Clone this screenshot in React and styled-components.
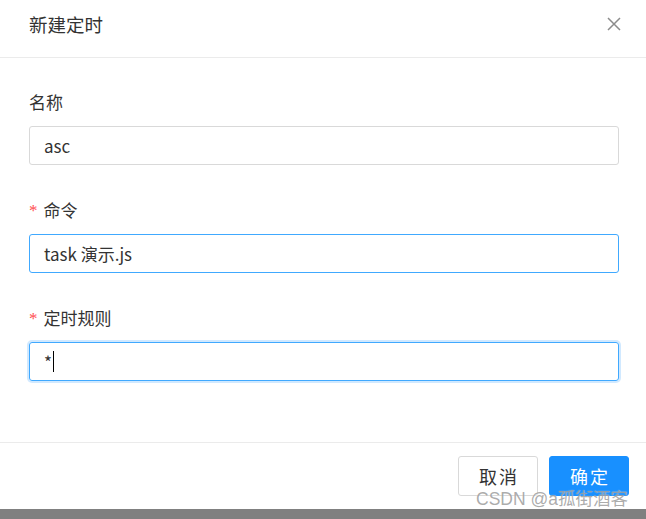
import React from 'react'
import styled, { createGlobalStyle } from 'styled-components'

const GlobalStyle = createGlobalStyle`
  html, body {
    margin: 0;
    padding: 0;
    background: #fff;
  }
  body {
    font-family: "Noto Sans CJK SC", "Noto Sans", sans-serif;
    color: #333;
  }
`

const Page = styled.div`
  position: relative;
  width: 646px;
  height: 519px;
  overflow: hidden;
  display: flex;
  flex-direction: column;
`

const Dialog = styled.div`
  flex: 1;
  display: flex;
  flex-direction: column;
  background: #fff;
`

const Header = styled.div`
  height: 57px;
  border-bottom: 1px solid #ebebeb;
  display: flex;
  align-items: center;
  justify-content: space-between;
  padding: 0 25px 0 29px;
  box-sizing: content-box;
`

const Title = styled.div`
  font-size: 18.5px;
  line-height: 24px;
  margin-top: -10px;
  color: #333;
`

const Close = styled.button`
  border: 0;
  background: none;
  padding: 0;
  width: 14px;
  height: 14px;
  margin-top: -10px;
  display: flex;
  cursor: pointer;
`

const Body = styled.div`
  padding: 30px 27px 30px 29px;
  border-bottom: 1px solid #ebebeb;
`

const Item = styled.div`
  display: flex;
  flex-direction: column;
  margin-bottom: 31px;
`

const Label = styled.label`
  height: 28px;
  line-height: 28px;
  margin-bottom: 10px;
  font-size: 17px;
  color: #333;
  display: flex;
  align-items: center;
`

const Star = styled.span`
  color: #ff4d4f;
  font-family: "Liberation Serif", serif;
  font-size: 17px;
  margin-right: 6px;
  margin-top: 2px;
`

const Field = styled.div`
  height: 39px;
  box-sizing: border-box;
  border: 1px solid ${p => (p.$active ? '#40a9ff' : '#d9d9d9')};
  border-radius: 3px;
  box-shadow: ${p => (p.$focus ? '0 0 0 2px rgba(24, 144, 255, 0.2)' : 'none')};
  padding: 0 14px;
  display: flex;
  align-items: center;
  font-size: 17px;
  color: #333;
`

const Caret = styled.span`
  display: inline-block;
  width: 1px;
  height: 21px;
  background: #000;
  margin-left: 1px;
`

const Footer = styled.div`
  display: flex;
  justify-content: flex-end;
  gap: 11px;
  padding: 13px 17px 0 0;
  flex: 1;
`

const Button = styled.button`
  width: 80px;
  height: 40px;
  box-sizing: border-box;
  border-radius: 3px;
  font-family: "Noto Sans CJK SC", sans-serif;
  font-size: 18px;
  letter-spacing: 0.12em;
  text-indent: 0.12em;
  cursor: pointer;
  border: 1px solid ${p => (p.$primary ? '#1890ff' : '#d9d9d9')};
  background: ${p => (p.$primary ? '#1890ff' : '#fff')};
  color: ${p => (p.$primary ? '#fff' : '#333')};
`

const Backdrop = styled.div`
  height: 10px;
  background: #808080;
`

const Watermark = styled.div`
  position: absolute;
  right: 18px;
  bottom: 9px;
  font-size: 17.5px;
  line-height: 22px;
  color: rgba(135, 135, 135, 0.7);
  font-family: "Liberation Sans", "Noto Sans CJK SC", sans-serif;
  text-shadow: 0 0 1px rgba(255, 255, 255, 0.7);
  pointer-events: none;
`

const CloseIcon = () => (
  <svg width="14" height="14" viewBox="0 0 14 14">
    <path d="M1 1 L13 13 M13 1 L1 13" stroke="#8c8c8c" strokeWidth="1.5" fill="none" />
  </svg>
)

const App = () => {
  return (
    <Page>
      <GlobalStyle />
      <Dialog>
        <Header>
          <Title>新建定时</Title>
          <Close aria-label="关闭"><CloseIcon /></Close>
        </Header>
        <Body>
          <Item>
            <Label>名称</Label>
            <Field>asc</Field>
          </Item>
          <Item>
            <Label><Star>*</Star>命令</Label>
            <Field $active>task 演示.js</Field>
          </Item>
          <Item>
            <Label><Star>*</Star>定时规则</Label>
            <Field $active $focus>*<Caret /></Field>
          </Item>
        </Body>
        <Footer>
          <Button>取消</Button>
          <Button $primary>确定</Button>
        </Footer>
      </Dialog>
      <Backdrop />
      <Watermark>CSDN @a孤街酒客</Watermark>
    </Page>
  )
}

export default App
